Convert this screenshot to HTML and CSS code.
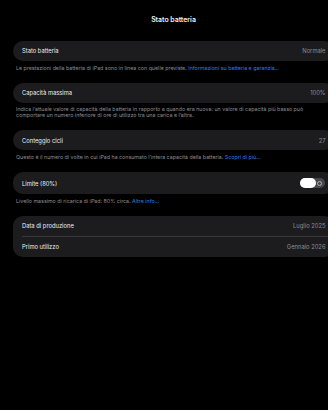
FILE: index.html
```html
<!DOCTYPE html>
<html lang="it">
<head>
<meta charset="utf-8">
<title>Stato batteria</title>
<link rel="stylesheet" href="styles.css">
</head>
<body>
<div class="page">
  <h1 class="title">Stato batteria</h1>

  <div class="card">
    <div class="row"><span class="label">Stato batteria</span><span class="value">Normale</span></div>
  </div>
  <p class="note">Le prestazioni della batteria di iPad sono in linea con quelle previste. <span class="link">Informazioni su batteria e garanzia...</span></p>

  <div class="card">
    <div class="row"><span class="label">Capacità massima</span><span class="value">100%</span></div>
  </div>
  <p class="note">Indica l’attuale valore di capacità della batteria in rapporto a quando era nuova: un valore di capacità più basso può comportare un numero inferiore di ore di utilizzo tra una carica e l’altra.</p>

  <div class="card">
    <div class="row"><span class="label">Conteggio cicli</span><span class="value">27</span></div>
  </div>
  <p class="note">Questo è il numero di volte in cui iPad ha consumato l’intera capacità della batteria. <span class="link">Scopri di più...</span></p>

  <div class="card">
    <div class="row row-toggle"><span class="label">Limite (80%)</span>
      <span class="toggle"><span class="knob"></span><span class="off-mark"></span></span>
    </div>
  </div>
  <p class="note">Livello massimo di ricarica di iPad: 80% circa. <span class="link">Altre info...</span></p>

  <div class="card">
    <div class="row"><span class="label">Data di produzione</span><span class="value">Luglio 2025</span></div>
    <div class="row divided"><span class="label">Primo utilizzo</span><span class="value">Gennaio 2026</span></div>
  </div>
</div>
</body>
</html>
```

FILE: styles.css
```css
html, body {
  margin: 0;
  padding: 0;
  background: #000;
  overflow: hidden;
}
body {
  width: 328px;
  height: 410px;
  font-family: Inter, "Noto Sans", "Liberation Sans", sans-serif;
  color: #fff;
}
.page {
  width: 321px;
  margin-left: 13px;
  padding-top: 15px;
}
.title {
  margin: 0;
  height: 10px;
  line-height: 10px;
  font-size: 6.9px;
  font-weight: 600;
  text-align: center;
  color: #f2f2f2;
  margin-bottom: 15.7px;
}
.card {
  background: #1c1c1e;
  border-radius: 10px;
}
.row {
  height: 20.5px;
  display: flex;
  align-items: center;
  justify-content: space-between;
  padding: 0 8.5px 0 9px;
  font-size: 5.8px;
}
.row-toggle {
  height: 22.5px;
}
.label {
  color: #ececec;
}
.value {
  color: #8d8d92;
}
.divided {
  position: relative;
  height: 21px;
}
.divided::before {
  content: "";
  position: absolute;
  left: 9px;
  right: 0;
  top: 0;
  height: 0.6px;
  background: #3a3a3c;
}
.note {
  margin: 0;
  padding: 4.4px 26px 11.6px 3px;
  font-size: 5.3px;
  line-height: 5.4px;
  color: #8d8d92;
}
.link {
  color: #2f7de6;
}
.toggle {
  width: 25px;
  height: 9.5px;
  border-radius: 5px;
  background: #48484c;
  display: flex;
  align-items: center;
  justify-content: space-between;
  padding: 0 2.5px 0 0;
  box-sizing: border-box;
  margin-right: 1px;
}
.knob {
  width: 16px;
  height: 9.5px;
  border-radius: 5px;
  background: #fff;
}
.off-mark {
  width: 3px;
  height: 3px;
  border: 0.7px solid #b0b0b0;
  border-radius: 50%;
}
```
